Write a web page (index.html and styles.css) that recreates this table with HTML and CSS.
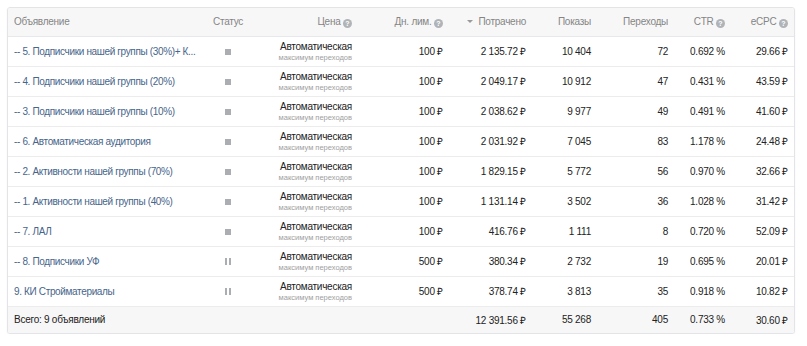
FILE: index.html
```html
<!DOCTYPE html>
<html lang="ru">
  <head>
    <meta charset="UTF-8" />
    <title>Объявления</title>
    <link rel="stylesheet" href="styles.css">
  </head>
  <body>
    <div class="ads-box">
      <table class="ads-table">
        <colgroup>
          <col class="c-name"><col class="c-status"><col class="c-price"><col class="c-limit"><col class="c-spent">
          <col class="c-views"><col class="c-clicks"><col class="c-ctr"><col class="c-ecpc">
        </colgroup>
        <thead>
          <tr>
            <th class="left">Объявление</th>
            <th class="center">Статус</th>
            <th>Цена <span class="hint">?</span></th>
            <th>Дн. лим. <span class="hint">?</span></th>
            <th><span class="sort"></span>Потрачено</th>
            <th>Показы</th>
            <th>Переходы</th>
            <th>CTR <span class="hint">?</span></th>
            <th>eCPC <span class="hint">?</span></th>
          </tr>
        </thead>
        <tbody>
          <tr>
            <td class="left"><a href="#">-- 5. Подписчики нашей группы (30%)+ К...</a></td>
            <td class="center"><span class="st-stop"></span></td>
            <td><div class="price">Автоматическая</div><div class="price-sub">максимум переходов</div></td>
            <td>100 ₽</td><td>2&nbsp;135.72 ₽</td><td>10&nbsp;404</td><td>72</td><td>0.692 %</td><td>29.66 ₽</td>
          </tr>
          <tr>
            <td class="left"><a href="#">-- 4. Подписчики нашей группы (20%)</a></td>
            <td class="center"><span class="st-stop"></span></td>
            <td><div class="price">Автоматическая</div><div class="price-sub">максимум переходов</div></td>
            <td>100 ₽</td><td>2&nbsp;049.17 ₽</td><td>10&nbsp;912</td><td>47</td><td>0.431 %</td><td>43.59 ₽</td>
          </tr>
          <tr>
            <td class="left"><a href="#">-- 3. Подписчики нашей группы (10%)</a></td>
            <td class="center"><span class="st-stop"></span></td>
            <td><div class="price">Автоматическая</div><div class="price-sub">максимум переходов</div></td>
            <td>100 ₽</td><td>2&nbsp;038.62 ₽</td><td>9&nbsp;977</td><td>49</td><td>0.491 %</td><td>41.60 ₽</td>
          </tr>
          <tr>
            <td class="left"><a href="#">-- 6. Автоматическая аудитория</a></td>
            <td class="center"><span class="st-stop"></span></td>
            <td><div class="price">Автоматическая</div><div class="price-sub">максимум переходов</div></td>
            <td>100 ₽</td><td>2&nbsp;031.92 ₽</td><td>7&nbsp;045</td><td>83</td><td>1.178 %</td><td>24.48 ₽</td>
          </tr>
          <tr>
            <td class="left"><a href="#">-- 2. Активности нашей группы (70%)</a></td>
            <td class="center"><span class="st-stop"></span></td>
            <td><div class="price">Автоматическая</div><div class="price-sub">максимум переходов</div></td>
            <td>100 ₽</td><td>1&nbsp;829.15 ₽</td><td>5&nbsp;772</td><td>56</td><td>0.970 %</td><td>32.66 ₽</td>
          </tr>
          <tr>
            <td class="left"><a href="#">-- 1. Активности нашей группы (40%)</a></td>
            <td class="center"><span class="st-stop"></span></td>
            <td><div class="price">Автоматическая</div><div class="price-sub">максимум переходов</div></td>
            <td>100 ₽</td><td>1&nbsp;131.14 ₽</td><td>3&nbsp;502</td><td>36</td><td>1.028 %</td><td>31.42 ₽</td>
          </tr>
          <tr>
            <td class="left"><a href="#">-- 7. ЛАЛ</a></td>
            <td class="center"><span class="st-stop"></span></td>
            <td><div class="price">Автоматическая</div><div class="price-sub">максимум переходов</div></td>
            <td>100 ₽</td><td>416.76 ₽</td><td>1&nbsp;111</td><td>8</td><td>0.720 %</td><td>52.09 ₽</td>
          </tr>
          <tr>
            <td class="left"><a href="#">-- 8. Подписчики УФ</a></td>
            <td class="center"><span class="st-pause"></span></td>
            <td><div class="price">Автоматическая</div><div class="price-sub">максимум переходов</div></td>
            <td>500 ₽</td><td>380.34 ₽</td><td>2&nbsp;732</td><td>19</td><td>0.695 %</td><td>20.01 ₽</td>
          </tr>
          <tr>
            <td class="left"><a href="#">9. КИ Стройматериалы</a></td>
            <td class="center"><span class="st-pause"></span></td>
            <td><div class="price">Автоматическая</div><div class="price-sub">максимум переходов</div></td>
            <td>500 ₽</td><td>378.74 ₽</td><td>3&nbsp;813</td><td>35</td><td>0.918 %</td><td>10.82 ₽</td>
          </tr>
        </tbody>
        <tfoot>
          <tr>
            <td class="left" colspan="2">Всего: 9 объявлений</td>
            <td></td><td></td>
            <td>12&nbsp;391.56 ₽</td><td>55&nbsp;268</td><td>405</td><td>0.733 %</td><td>30.60 ₽</td>
          </tr>
        </tfoot>
      </table>
    </div>
  </body>
</html>
```

FILE: styles.css
```css
* {
  margin: 0;
  padding: 0;
  box-sizing: border-box;
}
body {
  background: #fff;
  padding: 7px 12px 0 7px;
  font-family: 'Liberation Sans', Arial, sans-serif;
  font-size: 10px;
  letter-spacing: -0.25px;
  color: #222;
}

.ads-box {
  width: 788px;
  border: 1px solid #e3e4e8;
  border-radius: 3px;
  box-shadow: 0 1px 2px rgba(0, 0, 0, 0.06);
  overflow: hidden;
}

.ads-table {
  width: 786px;
  border-collapse: collapse;
  table-layout: fixed;
}
.c-name { width: 198px; }
.c-status { width: 44px; }
.c-price { width: 108px; }
.c-limit { width: 91px; }
.c-spent { width: 83px; }
.c-views { width: 65px; }
.c-clicks { width: 77px; }
.c-ctr { width: 57px; }
.c-ecpc { width: 63px; }

th, td {
  padding: 0 6px;
  text-align: right;
  white-space: nowrap;
  overflow: hidden;
}
th {
  height: 28px;
  background: #f7f7f7;
  color: #858585;
  font-weight: normal;
  border-bottom: 1px solid #e7e8ec;
}
td {
  height: 30px;
  border-bottom: 1px solid #ececec;
}
.left { text-align: left; }
.center { text-align: center; }

td a {
  color: #47658a;
  letter-spacing: -0.35px;
  text-decoration: none;
}

.price {
  font-size: 10px;
  line-height: 13px;
  letter-spacing: -0.25px;
  color: #222;
}
.price-sub {
  font-size: 7.5px;
  line-height: 9px;
  letter-spacing: 0;
  color: #a0a0a0;
}

.hint {
  display: inline-block;
  width: 9px;
  height: 9px;
  border-radius: 50%;
  background: #b0b3b8;
  color: #fff;
  font-size: 7px;
  font-weight: bold;
  line-height: 9px;
  letter-spacing: 0;
  text-align: center;
  vertical-align: -1px;
}

.sort {
  display: inline-block;
  width: 0;
  height: 0;
  border-left: 3px solid transparent;
  border-right: 3px solid transparent;
  border-top: 3px solid #9a9a9a;
  margin-right: 5px;
  vertical-align: 2px;
}

.st-stop {
  display: inline-block;
  width: 6px;
  height: 6px;
  background: #aaadb2;
  vertical-align: middle;
}
.st-pause {
  display: inline-block;
  width: 6px;
  height: 7px;
  border-left: 2px solid #aaadb2;
  border-right: 2px solid #aaadb2;
  vertical-align: middle;
}

tfoot td {
  height: 27px;
  background: #f7f7f7;
  border-bottom: none;
  color: #222;
}
```
